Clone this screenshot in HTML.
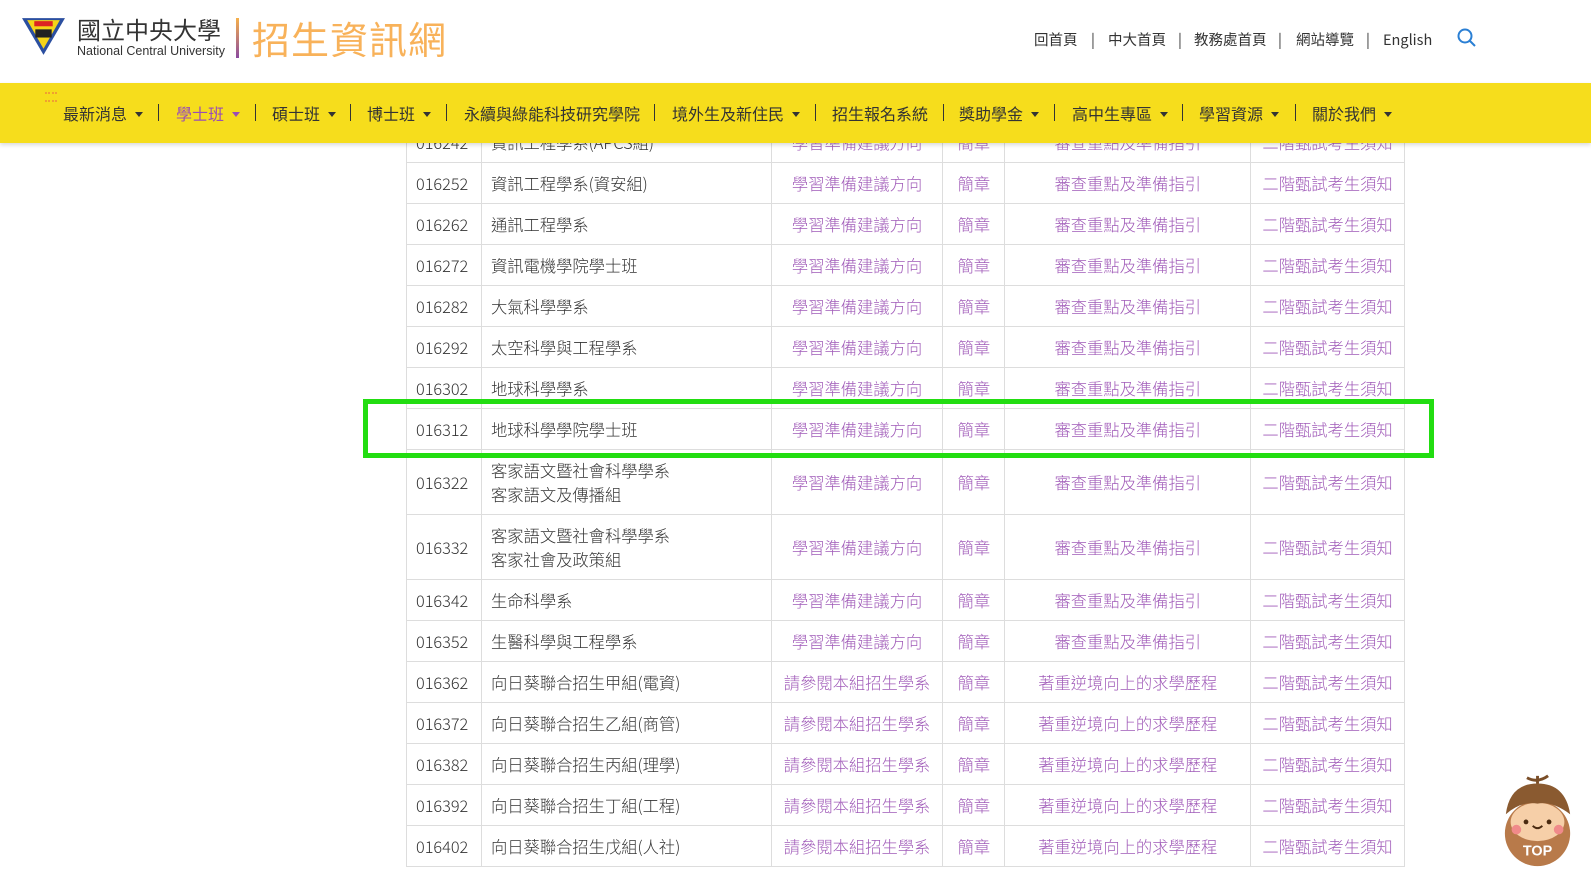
<!DOCTYPE html>
<html><head><meta charset="utf-8"><style>
body{margin:0;width:1591px;height:876px;overflow:hidden;background:#fff;font-family:"Liberation Sans","Noto Sans CJK TC",sans-serif;color:#333;position:relative}
.hdr{position:absolute;top:0;left:0;width:1591px;height:83px;background:#fff;z-index:5}
.nav{position:absolute;top:83px;left:0;width:1591px;height:60px;background:#f6dd1c;z-index:5;box-shadow:0 2px 4px rgba(0,0,0,.15)}
.nav span{position:absolute;top:18px;font-size:16px;color:#333;white-space:nowrap;font-family:"Noto Sans CJK TC",sans-serif}
.nav i{position:absolute;top:21px;width:1px;height:17px;background:#333}
.car{display:inline-block;border-left:4px solid transparent;border-right:4px solid transparent;border-top:5px solid #333;margin-left:8px;vertical-align:3px}
.tl{position:absolute;top:29px;font-size:14.5px;color:#333;font-family:"Noto Sans CJK TC",sans-serif}
table{position:absolute;left:406px;top:121px;border-collapse:collapse;width:999px;font-size:16.3px}
td{border:1px solid #ddd;height:40px;padding:0 9px;line-height:24px;font-family:"Noto Sans CJK TC",sans-serif;font-weight:300}
td.a{color:#a05ab8;text-align:center}
tr.t td{height:64px}
.box{position:absolute;left:363px;top:399px;width:1061px;height:49px;border:5px solid #22dd11;z-index:3}
</style></head><body>
<div class="hdr">
<svg style="position:absolute;left:21px;top:17px" width="45" height="39" viewBox="0 0 44 38"><polygon points="1,1 43,1 22,37" fill="#2b4fa0"/><polygon points="6,3 38,3 22,31" fill="#f5d418"/><rect x="13" y="4" width="18" height="5" fill="#d22"/><rect x="14" y="12" width="16" height="8" fill="#222"/></svg>
<div style="position:absolute;left:77px;top:13px;font-size:24px;color:#333;font-family:'Noto Sans CJK TC',sans-serif;line-height:32px">國立中央大學</div>
<div style="position:absolute;left:77px;top:44px;font-size:12.5px;color:#333">National Central University</div>
<div style="position:absolute;left:236px;top:18px;width:3px;height:40px;background:linear-gradient(#f6b04a,#8a4aa0)"></div>
<div style="position:absolute;left:252px;top:12px;font-size:38px;color:#f8b25a;letter-spacing:1px;font-family:'Noto Sans CJK TC',sans-serif;line-height:52px">招生資訊網</div>
<div class="tl" style="left:1034px">回首頁</div><div class="tl" style="left:1091px">|</div>
<div class="tl" style="left:1108px">中大首頁</div><div class="tl" style="left:1178px">|</div>
<div class="tl" style="left:1194px">教務處首頁</div><div class="tl" style="left:1278px">|</div>
<div class="tl" style="left:1296px">網站導覽</div><div class="tl" style="left:1366px">|</div>
<div class="tl" style="left:1383px">English</div>
<svg style="position:absolute;left:1457px;top:28px" width="20" height="20" viewBox="0 0 20 20"><circle cx="8" cy="8" r="6.5" fill="none" stroke="#2a7fd4" stroke-width="2"/><line x1="13" y1="13" x2="18" y2="18" stroke="#2a7fd4" stroke-width="2"/></svg>
</div>
<div class="nav">
<div style="position:absolute;left:45px;top:9px;width:12px;height:6px;border-top:2px dotted #f0a030;border-bottom:2px dotted #f0a030"></div>
<span style="left:63px">最新消息<b class="car"></b></span><i style="left:158px"></i>
<span style="left:176px;color:#9a4db5">學士班<b class="car" style="border-top-color:#9a4db5"></b></span><i style="left:255px"></i>
<span style="left:272px">碩士班<b class="car"></b></span><i style="left:350px"></i>
<span style="left:367px">博士班<b class="car"></b></span><i style="left:446px"></i>
<span style="left:464px">永續與綠能科技研究學院</span><i style="left:654px"></i>
<span style="left:672px">境外生及新住民<b class="car"></b></span><i style="left:815px"></i>
<span style="left:832px">招生報名系統</span><i style="left:943px"></i>
<span style="left:959px">獎助學金<b class="car"></b></span><i style="left:1054px"></i>
<span style="left:1072px">高中生專區<b class="car"></b></span><i style="left:1182px"></i>
<span style="left:1199px">學習資源<b class="car"></b></span><i style="left:1295px"></i>
<span style="left:1312px">關於我們<b class="car"></b></span>
</div>
<table>
<colgroup><col style="width:75px"><col style="width:290px"><col style="width:172px"><col style="width:62px"><col style="width:246px"><col style="width:154px"></colgroup>
<tr><td>016242</td><td>資訊工程學系(APCS組)</td><td class="a">學習準備建議方向</td><td class="a">簡章</td><td class="a">審查重點及準備指引</td><td class="a">二階甄試考生須知</td></tr>
<tr><td>016252</td><td>資訊工程學系(資安組)</td><td class="a">學習準備建議方向</td><td class="a">簡章</td><td class="a">審查重點及準備指引</td><td class="a">二階甄試考生須知</td></tr>
<tr><td>016262</td><td>通訊工程學系</td><td class="a">學習準備建議方向</td><td class="a">簡章</td><td class="a">審查重點及準備指引</td><td class="a">二階甄試考生須知</td></tr>
<tr><td>016272</td><td>資訊電機學院學士班</td><td class="a">學習準備建議方向</td><td class="a">簡章</td><td class="a">審查重點及準備指引</td><td class="a">二階甄試考生須知</td></tr>
<tr><td>016282</td><td>大氣科學學系</td><td class="a">學習準備建議方向</td><td class="a">簡章</td><td class="a">審查重點及準備指引</td><td class="a">二階甄試考生須知</td></tr>
<tr><td>016292</td><td>太空科學與工程學系</td><td class="a">學習準備建議方向</td><td class="a">簡章</td><td class="a">審查重點及準備指引</td><td class="a">二階甄試考生須知</td></tr>
<tr><td>016302</td><td>地球科學學系</td><td class="a">學習準備建議方向</td><td class="a">簡章</td><td class="a">審查重點及準備指引</td><td class="a">二階甄試考生須知</td></tr>
<tr><td>016312</td><td>地球科學學院學士班</td><td class="a">學習準備建議方向</td><td class="a">簡章</td><td class="a">審查重點及準備指引</td><td class="a">二階甄試考生須知</td></tr>
<tr class="t"><td>016322</td><td>客家語文暨社會科學學系<br>客家語文及傳播組</td><td class="a">學習準備建議方向</td><td class="a">簡章</td><td class="a">審查重點及準備指引</td><td class="a">二階甄試考生須知</td></tr>
<tr class="t"><td>016332</td><td>客家語文暨社會科學學系<br>客家社會及政策組</td><td class="a">學習準備建議方向</td><td class="a">簡章</td><td class="a">審查重點及準備指引</td><td class="a">二階甄試考生須知</td></tr>
<tr><td>016342</td><td>生命科學系</td><td class="a">學習準備建議方向</td><td class="a">簡章</td><td class="a">審查重點及準備指引</td><td class="a">二階甄試考生須知</td></tr>
<tr><td>016352</td><td>生醫科學與工程學系</td><td class="a">學習準備建議方向</td><td class="a">簡章</td><td class="a">審查重點及準備指引</td><td class="a">二階甄試考生須知</td></tr>
<tr><td>016362</td><td>向日葵聯合招生甲組(電資)</td><td class="a">請參閱本組招生學系</td><td class="a">簡章</td><td class="a">著重逆境向上的求學歷程</td><td class="a">二階甄試考生須知</td></tr>
<tr><td>016372</td><td>向日葵聯合招生乙組(商管)</td><td class="a">請參閱本組招生學系</td><td class="a">簡章</td><td class="a">著重逆境向上的求學歷程</td><td class="a">二階甄試考生須知</td></tr>
<tr><td>016382</td><td>向日葵聯合招生丙組(理學)</td><td class="a">請參閱本組招生學系</td><td class="a">簡章</td><td class="a">著重逆境向上的求學歷程</td><td class="a">二階甄試考生須知</td></tr>
<tr><td>016392</td><td>向日葵聯合招生丁組(工程)</td><td class="a">請參閱本組招生學系</td><td class="a">簡章</td><td class="a">著重逆境向上的求學歷程</td><td class="a">二階甄試考生須知</td></tr>
<tr><td>016402</td><td>向日葵聯合招生戊組(人社)</td><td class="a">請參閱本組招生學系</td><td class="a">簡章</td><td class="a">著重逆境向上的求學歷程</td><td class="a">二階甄試考生須知</td></tr>
</table>
<div class="box"></div>
<svg style="position:absolute;left:1502px;top:772px;z-index:6" width="72" height="96" viewBox="0 0 75 100"><ellipse cx="37" cy="64" rx="34" ry="34" fill="#b87a4a"/><ellipse cx="37" cy="52" rx="28" ry="20" fill="#f6cfa8"/><path d="M4 44 Q8 12 37 12 Q66 12 71 44 Q52 30 37 33 Q20 30 4 44Z" fill="#8a5a30"/><path d="M26 6 Q37 12 48 4 M37 4 L37 12" stroke="#7a4e28" stroke-width="3" fill="none"/><circle cx="25" cy="52" r="2.5" fill="#4a2a10"/><circle cx="49" cy="52" r="2.5" fill="#4a2a10"/><path d="M32 56 Q37 61 42 56" stroke="#4a2a10" stroke-width="2" fill="none"/><circle cx="15" cy="60" r="5" fill="#f08a8a"/><circle cx="59" cy="60" r="5" fill="#f08a8a"/><text x="37" y="87" text-anchor="middle" font-family="Liberation Sans" font-weight="bold" font-size="15" fill="#fff">TOP</text></svg>
</body></html>
